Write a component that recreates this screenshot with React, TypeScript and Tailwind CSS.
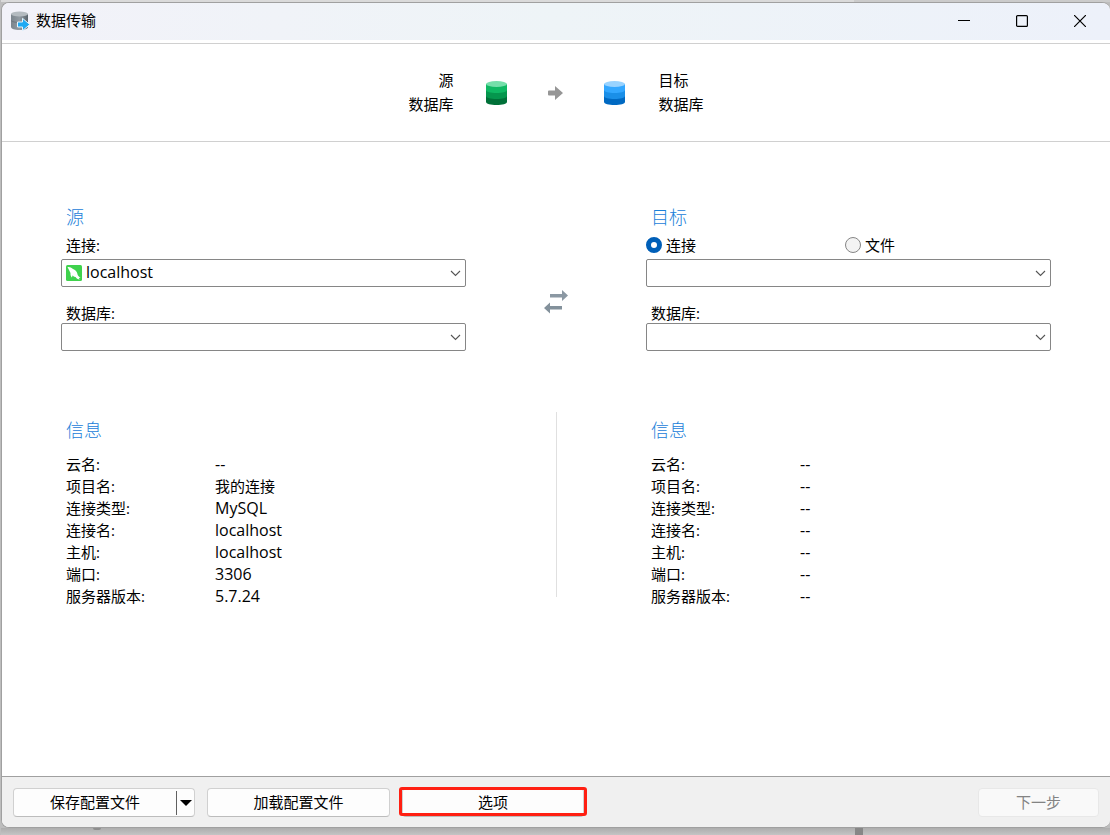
import React, { useState } from 'react';

interface InfoRow {
  label: string;
  value: string;
}

const sourceInfo: InfoRow[] = [
  { label: '云名:', value: '--' },
  { label: '项目名:', value: '我的连接' },
  { label: '连接类型:', value: 'MySQL' },
  { label: '连接名:', value: 'localhost' },
  { label: '主机:', value: 'localhost' },
  { label: '端口:', value: '3306' },
  { label: '服务器版本:', value: '5.7.24' },
];

const targetInfo: InfoRow[] = sourceInfo.map(({ label }) => ({ label, value: '--' }));

// Latin glyphs look small beside the Chinese ones, so they get one size up
const isLatin = (text: string) => /^[ -~]+$/.test(text);

interface DatabaseIconProps {
  top: string;
  upper: string;
  middle: string;
  lower: string;
}

const DatabaseIcon: React.FC<DatabaseIconProps> = ({ top, upper, middle, lower }) => (
  <svg width="21" height="24" viewBox="0 0 21 24" aria-hidden="true">
    <path d="M0 15h21v6c0 1.7-4.700 3-10.500 3S0 22.700 0 21z" fill={lower} />
    <path d="M0 9h21v6c0 1.700-4.700 3-10.500 3S0 16.700 0 15z" fill={middle} />
    <path d="M0 3h21v6c0 1.700-4.700 3-10.500 3S0 10.700 0 9z" fill={upper} />
    <ellipse cx="10.500" cy="3" rx="10.500" ry="3" fill={top} />
  </svg>
);

const AppIcon = () => (
  <svg width="20" height="20" viewBox="0 0 20 20" aria-hidden="true">
    <defs>
      <linearGradient id="drum" x1="0" x2="1" y1="0" y2="0">
        <stop offset="0" stopColor="#7b858d" />
        <stop offset="0.500" stopColor="#929ba2" />
        <stop offset="1" stopColor="#59646c" />
      </linearGradient>
    </defs>
    <path d="M1 3v13c0 1.700 3.800 3 8.500 3s8.500-1.300 8.500-3V3z" fill="url(#drum)" />
    <path d="M1 9.500c1 1.200 4 2 8.500 2s7.500-.800 8.500-2" fill="none" stroke="#6c767e" />
    <ellipse cx="9.500" cy="3" rx="8.500" ry="2.400" fill="#b4bbc0" />
    <path
      d="M7.500 11h5V7.300l7.300 6.200-7.300 6.200V16h-5z"
      fill="#1fa9f2"
      stroke="#e6f4fc"
      strokeLinejoin="round"
    />
  </svg>
);

const ArrowIcon = () => (
  <svg width="15" height="14" viewBox="0 0 15 14" aria-hidden="true">
    <path d="M1 4.500h6V0l8 7-8 7V9.500H1a1 1 0 0 1-1-1v-3a1 1 0 0 1 1-1z" fill="#969696" />
  </svg>
);

const SwapIcon = () => (
  <svg width="24" height="24" viewBox="0 0 24 24" aria-hidden="true">
    <path d="M6 4h12V0l6 5.500-6 5.500V7.500H6z" fill="#8b98a3" />
    <path d="M18 16H6v-3.500L0 18l6 5.500v-4h12z" fill="#83919b" />
  </svg>
);

const MySqlIcon = () => (
  <svg width="16" height="16" viewBox="0 0 16 16" aria-hidden="true">
    <rect width="16" height="16" rx="1.500" fill="#3fd24d" />
    <path
      d="M1.500 2c2-.3 4 .5 5.500 2 2.200.7 3.800 2.300 4.300 4.500.3 1.800 1 2.900 3.200 4.300l-1.700.2.900 1.500c-2-.2-3.300-1.200-4.100-2.500-1.300.2-2.200-.5-2.800-1.700l-1 2.200c-1-1.300-1.500-2.800-1.300-4.500C3.500 6 2.500 4 1.500 2z"
      fill="#fff"
    />
  </svg>
);

interface ComboProps {
  id: string;
  label?: string;
  options?: string[];
  icon?: React.ReactNode;
}

const Combo: React.FC<ComboProps> = ({ id, label, options = [''], icon }) => (
  <div className="relative">
    {icon && <span className="pointer-events-none absolute top-1.5 left-[5px]">{icon}</span>}
    <select
      id={id}
      aria-label={label}
      className="block h-7 w-full appearance-none rounded-[2px] border border-[#868686] bg-white pr-7 pb-0.5 pl-6 text-base/5"
    >
      {options.map((option) => (
        <option key={option}>{option}</option>
      ))}
    </select>
    <svg
      className="pointer-events-none absolute top-[11px] right-[5px]"
      width="11"
      height="7"
      viewBox="0 0 11 7"
      aria-hidden="true"
    >
      <path d="M1 1l4.500 4.500L10 1" fill="none" stroke="#555" strokeWidth="1.100" />
    </svg>
  </div>
);

const InfoPanel: React.FC<{ rows: InfoRow[] }> = ({ rows }) => (
  <section className="pt-1.5 pl-[5px]">
    <h2 className="text-lg/6 font-light text-[#1a80d9]">信息</h2>
    <dl className="mt-[11px]">
      {rows.map((row) => (
        <div key={row.label} className="grid grid-cols-[149px_1fr] leading-[22px]">
          <dt>{row.label}</dt>
          <dd className={isLatin(row.value) ? 'text-base/[22px]' : ''}>{row.value}</dd>
        </div>
      ))}
    </dl>
  </section>
);

const radioClass =
  'size-4 appearance-none rounded-full border border-[#868686] bg-[#f3f3f3] checked:border-[5px] checked:border-[#005fb8] checked:bg-white';

const buttonClass = 'h-[29px] rounded border border-[#d0d0d0] border-b-[#bcbcbc] bg-[#fdfdfd]';

const App: React.FC = () => {
  const [targetType, setTargetType] = useState('connection');

  return (
    <div className="flex min-h-screen flex-col bg-[#bdbdbd] pl-px font-['Open_Sans','Noto_Sans_CJK_SC',sans-serif] text-[15px] text-black">
      <div className="flex h-0.5">
        <div className="flex-1 bg-[#dadada]" />
        <div className="w-[256px] bg-[#cbcbcb]" />
      </div>

      <div className="flex flex-1 flex-col overflow-hidden rounded-lg border border-r-0 border-[#a0a0a0] bg-white">
        <header className="flex h-[37px] items-center bg-linear-to-r from-[#f2f2f9] via-[#eef4f7] to-[#edf1fa] pr-px pb-0.5 pl-2">
          <AppIcon />
          <h1 className="ml-1.5 flex-1 pb-0.5 leading-5">数据传输</h1>
          <button aria-label="最小化" className="flex h-full w-[58px] items-center justify-center">
            <svg width="12" height="12" viewBox="0 0 12 12">
              <path d="M0 5.500h12" stroke="#000" />
            </svg>
          </button>
          <button aria-label="最大化" className="flex h-full w-[58px] items-center justify-center">
            <svg width="12" height="12" viewBox="0 0 12 12">
              <rect x="0.600" y="0.600" width="10.800" height="10.800" rx="1" fill="none" stroke="#000" strokeWidth="1.200" />
            </svg>
          </button>
          <button aria-label="关闭" className="flex h-full w-[58px] items-center justify-center">
            <svg width="12" height="12" viewBox="0 0 12 12">
              <path d="M0 0l12 12M12 0L0 12" stroke="#000" strokeWidth="1.200" />
            </svg>
          </button>
        </header>

        <div className="mt-[3px] flex h-[99px] items-center justify-center gap-8 border-y border-[#d0d0d0] leading-6">
          <div className="pb-0.5 text-right">
            <p>源</p>
            <p>数据库</p>
          </div>
          <div className="flex items-center gap-[41px]">
            <DatabaseIcon top="#75dfaa" upper="#0fb863" middle="#05964d" lower="#007038" />
            <ArrowIcon />
            <DatabaseIcon top="#99d3ff" upper="#33a7ff" middle="#1a8fe8" lower="#0069c2" />
          </div>
          <div className="pb-0.5 pl-0.5">
            <p>目标</p>
            <p>数据库</p>
          </div>
        </div>

        <main className="flex-1 px-[59px] pt-[63px] pb-8">
          <div className="grid grid-cols-[1fr_180px_1fr]">
            <section>
              <h2 className="pl-[5px] text-lg/6 font-light text-[#1a80d9]">源</h2>
              <label htmlFor="source-connection" className="mt-1.5 mb-1 block pl-[5px] leading-5">
                连接:
              </label>
              <Combo id="source-connection" options={['localhost']} icon={<MySqlIcon />} />
              <label htmlFor="source-database" className="mt-4 block pl-[5px] leading-5">
                数据库:
              </label>
              <Combo id="source-database" />
            </section>

            <button aria-label="交换源和目标" className="mb-[37px] self-end justify-self-center">
              <SwapIcon />
            </button>

            <section>
              <h2 className="pl-[5px] text-lg/6 font-light text-[#1a80d9]">目标</h2>
              <div className="mt-1.5 mb-1 flex leading-5">
                <label className="flex w-[199px] items-center gap-1">
                  <input
                    type="radio"
                    name="target"
                    className={radioClass}
                    checked={targetType === 'connection'}
                    onChange={() => setTargetType('connection')}
                  />
                  连接
                </label>
                <label className="flex items-center gap-1">
                  <input
                    type="radio"
                    name="target"
                    className={radioClass}
                    checked={targetType === 'file'}
                    onChange={() => setTargetType('file')}
                  />
                  文件
                </label>
              </div>
              <Combo id="target-connection" label="目标连接" />
              <label htmlFor="target-database" className="mt-4 block pl-[5px] leading-5">
                数据库:
              </label>
              <Combo id="target-database" />
            </section>
          </div>

          <div className="mt-[61px] grid grid-cols-[1fr_180px_1fr]">
            <InfoPanel rows={sourceInfo} />
            <div className="mb-2.5 w-px justify-self-center bg-[#e0e0e0]" />
            <InfoPanel rows={targetInfo} />
          </div>
        </main>

        <footer className="flex gap-3 border-t border-[#a0a0a0] bg-[#f0f0f0] px-[11px] pt-[11px] pb-2.5 leading-5">
          <div className={`${buttonClass} flex w-[182px] items-center`}>
            <button className="h-full flex-1 pb-0.5">保存配置文件</button>
            <button
              aria-label="更多保存选项"
              className="flex h-6 w-[18px] items-center justify-center border-l border-[#606060]"
            >
              <svg width="12" height="6" viewBox="0 0 12 6">
                <path d="M0 0h12L6 6z" />
              </svg>
            </button>
          </div>
          <button className={`${buttonClass} w-[183px] pb-0.5`}>加载配置文件</button>
          <button className={`${buttonClass} relative w-[182px] pb-0.5`}>
            选项
            <span className="absolute -inset-x-1 -top-0.5 bottom-0 rounded-[3px] border-3 border-[#ff1f12]" />
          </button>
          <button
            disabled
            className="ml-auto h-[29px] w-[121px] rounded border border-[#e8e8e8] bg-[#f9f9f9] pb-0.5 text-[#838383]"
          >
            下一步
          </button>
        </footer>
      </div>

      <div className="flex h-[7px] bg-linear-to-b from-[#adadad] to-[#c4c4c4] pr-[247px] pl-[92px]">
        <div className="h-0.5 w-2 rounded-b-full bg-[#8e8e8e]" />
        <div className="ml-auto w-2 bg-[#878787]" />
      </div>
    </div>
  );
};

export default App;
